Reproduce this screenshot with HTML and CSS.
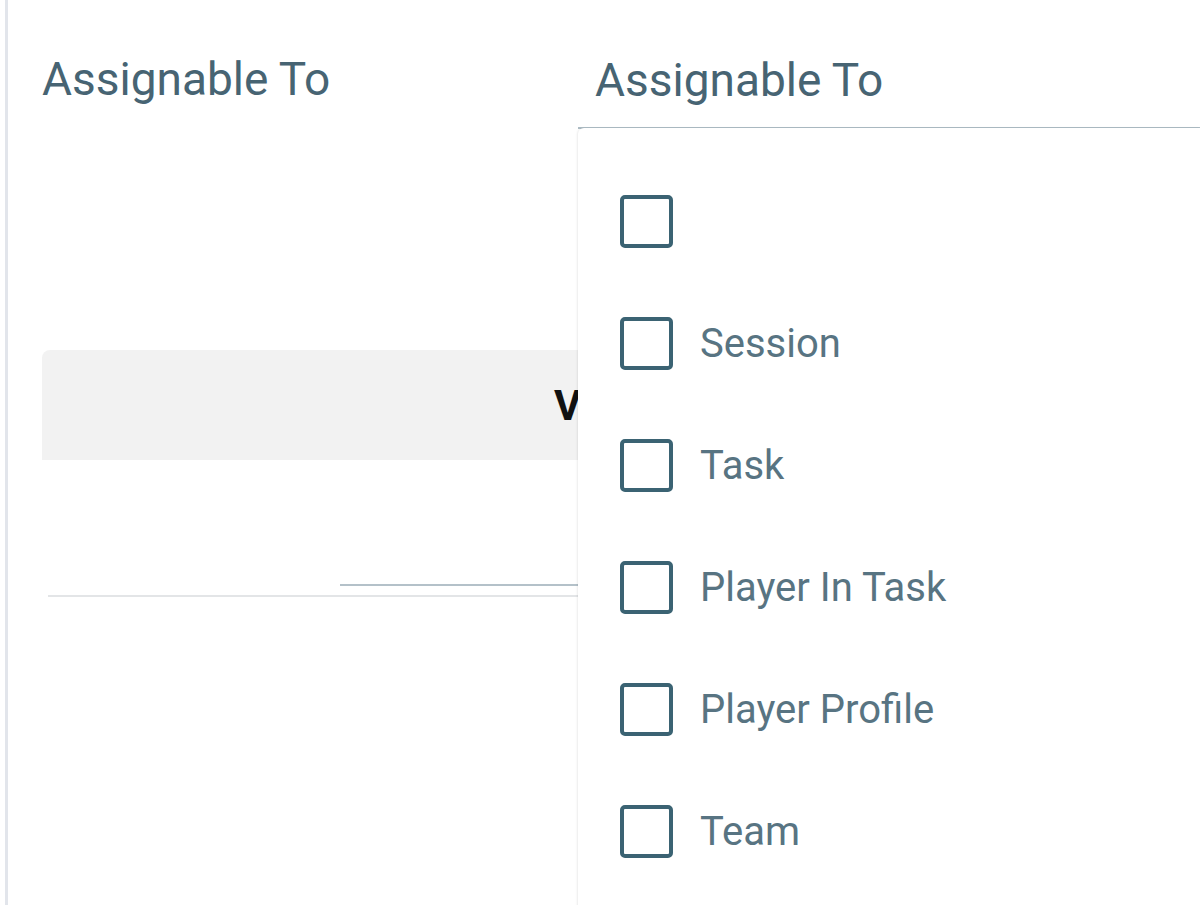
FILE: index.html
```html
<!DOCTYPE html>
<html>
<head>
<meta charset="utf-8">
<link rel="stylesheet" href="styles.css">
</head>
<body>
<div class="frame">
  <div class="content">
    <div class="field-row">
      <div class="plain-label">Assignable To</div>
      <div class="field">
        <div class="field-label">Assignable To</div>
        <div class="menu">
          <label class="option"><span class="box"></span><span class="opt-text"></span></label>
          <label class="option"><span class="box"></span><span class="opt-text">Session</span></label>
          <label class="option"><span class="box"></span><span class="opt-text">Task</span></label>
          <label class="option"><span class="box"></span><span class="opt-text">Player In Task</span></label>
          <label class="option"><span class="box"></span><span class="opt-text">Player Profile</span></label>
          <label class="option"><span class="box"></span><span class="opt-text">Team</span></label>
        </div>
      </div>
    </div>
    <div class="action">View</div>
    <div class="indicator"></div>
    <div class="divider"></div>
  </div>
</div>
</body>
</html>
```

FILE: styles.css
```css
html, body {
  margin: 0;
  padding: 0;
  background: #ffffff;
  height: 905px;
  overflow: hidden;
  font-family: Roboto, "Noto Sans", sans-serif;
}

.frame {
  margin-left: 5px;
  border-left: 3px solid #e2e5eb;
  height: 905px;
}

.content {
  padding-left: 34px;
  display: flex;
  flex-direction: column;
}

.field-row {
  display: grid;
  grid-template-columns: 536px 1fr;
}

.plain-label {
  font-size: 46px;
  line-height: 54px;
  color: #476473;
  padding-top: 52px;
}

.field {
  position: relative;
  padding-top: 53px;
  height: 74px;
  border-bottom: 2px solid #adbcc4;
}

.field-label {
  font-size: 46px;
  line-height: 54px;
  color: #476473;
  padding-left: 17px;
}

.menu {
  position: absolute;
  top: 100%;
  left: 0;
  right: 0;
  height: 790px;
  margin-top: 1px;
  background: #ffffff;
  border-top-left-radius: 6px;
  box-shadow: -1px 0 2px rgba(0, 0, 0, 0.08);
  padding-top: 32px;
  padding-left: 42px;
  z-index: 2;
}

.option {
  display: flex;
  align-items: center;
  height: 122px;
  gap: 27px;
}

.box {
  width: 45px;
  height: 45px;
  border: 4px solid #3b6373;
  border-radius: 5px;
  flex: none;
}

.opt-text {
  font-size: 40px;
  color: #587482;
}

.action {
  margin-top: 221px;
  margin-right: 42px;
  height: 110px;
  background: #f2f2f2;
  border-top-left-radius: 8px;
  border-top-right-radius: 8px;
  display: flex;
  align-items: center;
  justify-content: center;
  font-size: 42px;
  font-weight: 700;
  color: #111111;
}

.indicator {
  margin-top: 124px;
  margin-left: 298px;
  height: 2px;
  background: #b4c1c9;
}

.divider {
  margin-top: 9px;
  margin-left: 6px;
  height: 2px;
  background: #e3e5e7;
}
```
